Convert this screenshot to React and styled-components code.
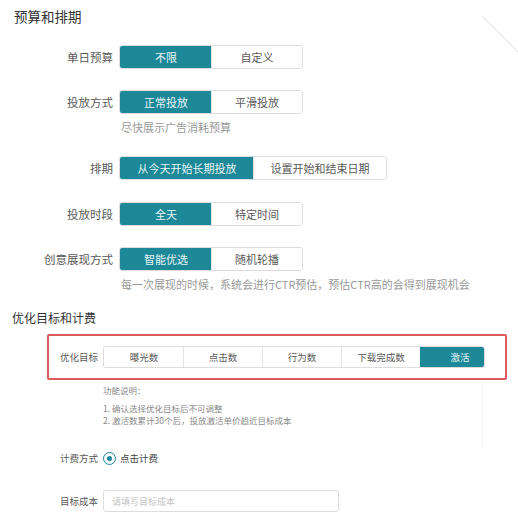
import styled, { createGlobalStyle } from 'styled-components'

const GlobalStyle = createGlobalStyle`
body {
    margin: 0;
    background: #fff;
    font-family: "Noto Sans CJK SC", "Noto Sans", sans-serif;
    color: #333;
}
`

const Page = styled.div`
position: relative;
width: 518px;
height: 531px;
padding-top: 6px;
box-sizing: border-box;
overflow: hidden;
`

const Corner = styled.svg`
position: absolute;
top: 0;
right: 0;
`

const SectionTitle = styled.h2`
margin: ${p => p.$top || 0}px 0 0 ${p => p.$left}px;
font-size: ${p => p.$size}px;
font-weight: 400;
line-height: 20px;
color: #333;
`

const Row = styled.div`
display: grid;
grid-template-columns: ${p => p.$labelWidth}px auto;
column-gap: ${p => p.$gap}px;
align-items: center;
margin-top: ${p => p.$top}px;
margin-left: ${p => p.$left || 0}px;
`

const Label = styled.span`
font-size: ${p => p.$size || 11.5}px;
color: #595959;
text-align: ${p => p.$align || 'right'};
white-space: nowrap;
`

const Segmented = styled.div`
display: flex;
width: ${p => p.$width ? `${p.$width}px` : 'max-content'};
border: 1px solid #ddd;
border-radius: 3px;
overflow: hidden;
`

const Segment = styled.div`
flex: 0 0 ${p => p.$width}px;
height: ${p => p.$height}px;
display: flex;
align-items: center;
justify-content: center;
font-size: ${p => p.$size}px;
background: ${p => p.$active ? '#1c8898' : '#fff'};
color: ${p => p.$active ? '#e6f4f6' : '#5a5a5a'};
border-left: 1px solid ${p => p.$first || p.$active ? 'transparent' : '#e3e3e3'};
white-space: nowrap;
box-sizing: border-box;
`

const Help = styled.div`
margin: 4px 0 0 121px;
font-size: 11px;
line-height: 18px;
color: #999;
`

const RedBox = styled.div`
margin: 6px 11px 0 47px;
border: 2px solid #dc5c5e;
border-radius: 2px;
padding: 10px 0;
`

const Notes = styled.div`
margin-left: 103px;
width: 380px;
box-sizing: border-box;
padding: 4px 0 23px;
border-right: 1px solid #f3f3f3;
font-size: 8.5px;
line-height: 12px;
color: #8a8a8a;
`

const NoteTitle = styled.div`
margin-bottom: 6px;
`

const RadioWrap = styled.label`
display: flex;
align-items: center;
gap: 4px;
font-size: 9.5px;
color: #444;
line-height: 18px;
`

const RadioDot = styled.span`
width: 11px;
height: 11px;
border: 1px solid #1c8898;
border-radius: 50%;
display: flex;
align-items: center;
justify-content: center;

&::after {
    content: '';
    width: 5px;
    height: 5px;
    border-radius: 50%;
    background: #1c8898;
}
`

const TextInput = styled.input`
width: 236px;
height: 22px;
box-sizing: border-box;
border: 1px solid #ddd;
border-radius: 3px;
padding: 0 8px;
font-family: inherit;
font-size: 9px;
outline: none;

&::placeholder {
    color: #c4c4c4;
}
`

const budgetRows = [
    { label: '单日预算', top: 19, w: 91, opts: ['不限', '自定义'] },
    { label: '投放方式', top: 21, w: 91, opts: ['正常投放', '平滑投放'], help: '尽快展示广告消耗预算' },
    { label: '排期', top: 20, w: 133, opts: ['从今天开始长期投放', '设置开始和结束日期'] },
    { label: '投放时段', top: 22, w: 91, opts: ['全天', '特定时间'] },
    { label: '创意展现方式', top: 21, w: 91, opts: ['智能优选', '随机轮播'], help: '每一次展现的时候，系统会进行CTR预估，预估CTR高的会得到展现机会' },
]

const goals = ['曝光数', '点击数', '行为数', '下载完成数', '激活']

const App = () => {
    return (
        <>
            <GlobalStyle />
            <Page>
                <Corner width="40" height="60" viewBox="0 0 40 60">
                    <line x1="5" y1="17" x2="40" y2="52" stroke="#ececec" strokeWidth="1.5" />
                </Corner>

                <SectionTitle $left={14} $size={13.5}>预算和排期</SectionTitle>

                {budgetRows.map(r => (
                    <div key={r.label}>
                        <Row $labelWidth={113} $gap={6} $top={r.top}>
                            <Label>{r.label}</Label>
                            <Segmented>
                                {r.opts.map((o, i) => (
                                    <Segment key={o} $width={r.w} $height={22} $size={11} $active={i === 0} $first={i === 0}>
                                        {o}
                                    </Segment>
                                ))}
                            </Segmented>
                        </Row>
                        {r.help && <Help>{r.help}</Help>}
                    </div>
                ))}

                <SectionTitle $left={12} $size={12} $top={15}>优化目标和计费</SectionTitle>

                <RedBox>
                    <Row $labelWidth={37} $gap={6} $top={0} $left={11}>
                        <Label $size={9.5} $align="left">优化目标</Label>
                        <Segmented $width={380}>
                            {goals.map((g, i) => (
                                <Segment key={g} $width={79} $height={20} $size={9.5} $active={i === goals.length - 1} $first={i === 0}>
                                    {g}
                                </Segment>
                            ))}
                        </Segmented>
                    </Row>
                </RedBox>

                <Notes>
                    <NoteTitle>功能说明：</NoteTitle>
                    <div>1. 确认选择优化目标后不可调整</div>
                    <div>2. 激活数累计30个后，投放激活单价趋近目标成本</div>
                </Notes>

                <Row $labelWidth={37} $gap={6} $top={0} $left={60}>
                    <Label $size={9.5} $align="left">计费方式</Label>
                    <RadioWrap>
                        <RadioDot />
                        点击计费
                    </RadioWrap>
                </Row>

                <Row $labelWidth={37} $gap={6} $top={23} $left={60}>
                    <Label $size={9.5} $align="left">目标成本</Label>
                    <TextInput placeholder="请填写目标成本" />
                </Row>
            </Page>
        </>
    )
}

export default App
